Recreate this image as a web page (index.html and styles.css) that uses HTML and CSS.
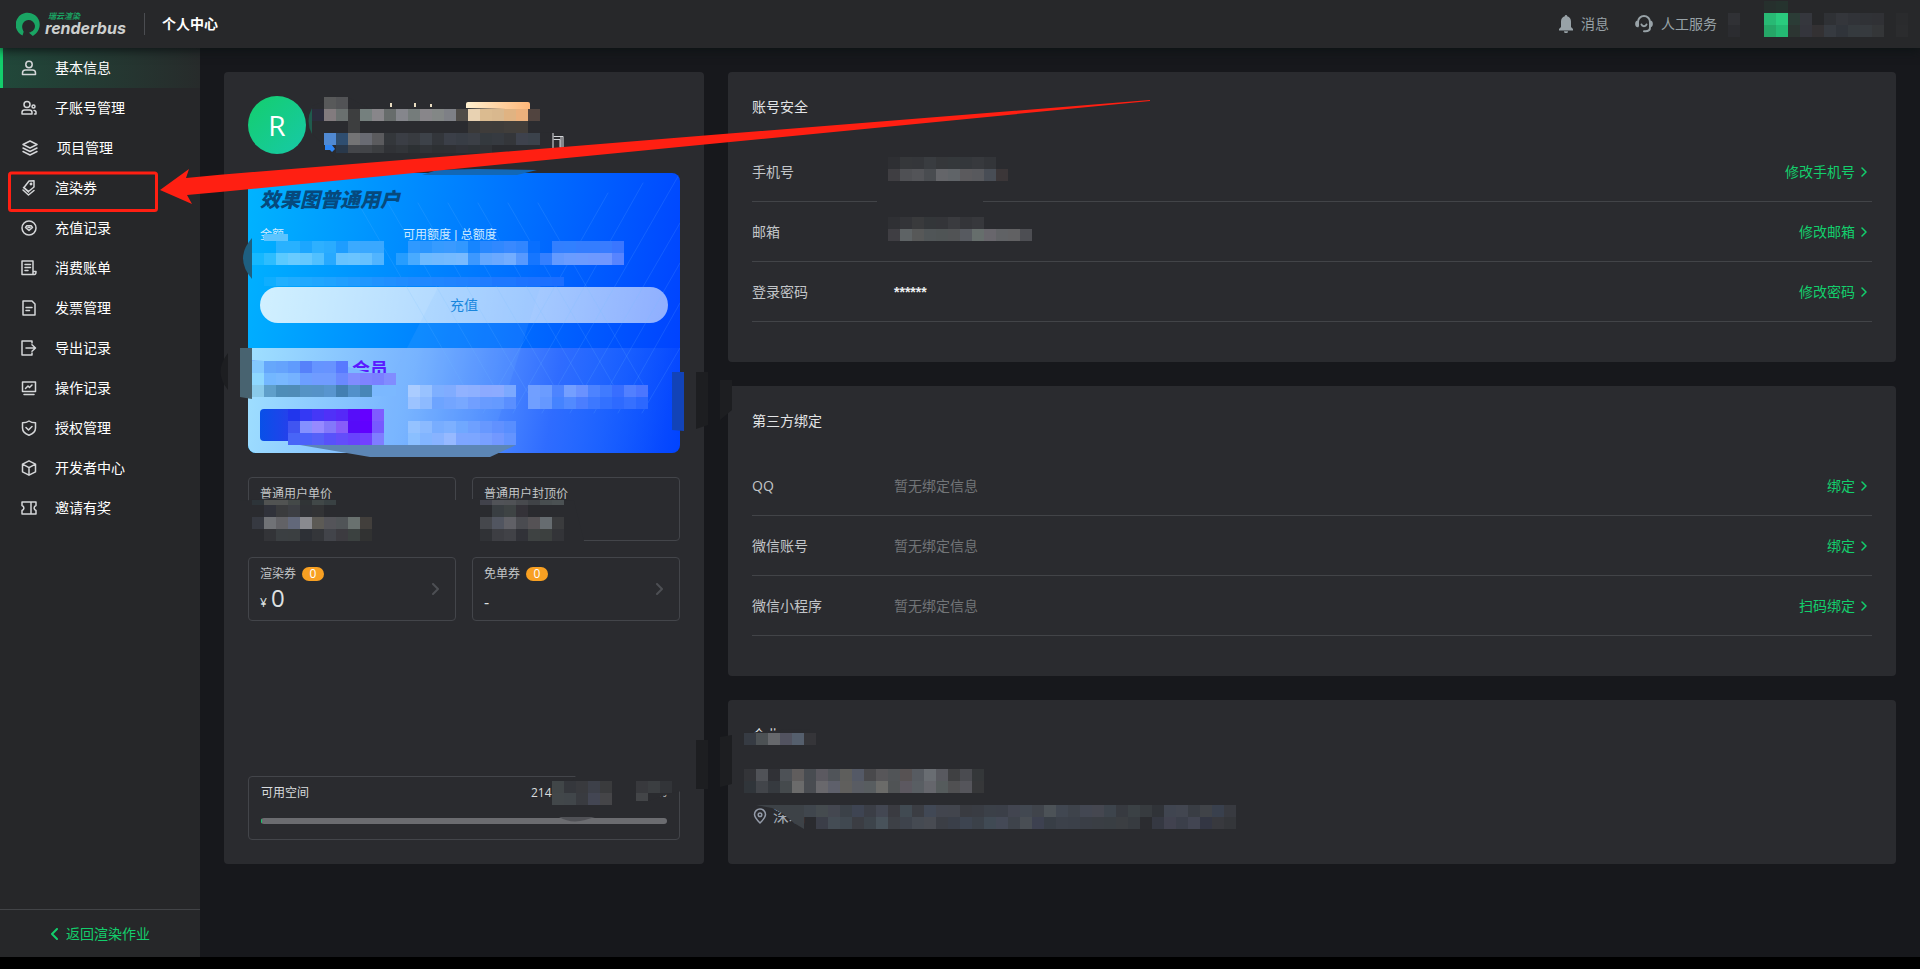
FILE: index.html
```html
<!DOCTYPE html>
<html lang="zh-CN">
<head>
<meta charset="utf-8">
<title>个人中心</title>
<link rel="stylesheet" href="styles.css">
</head>
<body>
<header class="topbar">
  <a class="logo" href="#">
    <svg class="logo-mark" viewBox="0 0 26 26" aria-hidden="true"><path d="M6.800 24.500A12.500 12.500 0 1 1 20.500 22.500L17.500 25L13.500 21.500C18 20.500 20 17.500 19.700 14A6.700 6.700 0 0 0 6.400 14.500C6.400 17 7 18.500 8 20.500Z"/></svg>
    <span class="logo-text"><span class="logo-cn">瑞云渲染</span><span class="logo-en">renderbus</span></span>
  </a>
  <h1 class="topbar-title">个人中心</h1>
  <nav class="topbar-links">
    <a class="topbar-link" href="#"><svg class="icon-bell" viewBox="0 0 14 18" aria-hidden="true"><path d="M7 0a1.200 1.200 0 0 1 1.200 1.300C10.800 1.900 12 4 12 6.500V12l2 2v1.400H0V14l2-2V6.500C2 4 3.200 1.900 5.800 1.300A1.200 1.200 0 0 1 7 0ZM5 16.300h4A2 2 0 0 1 5 16.300Z"/></svg>消息</a>
    <a class="topbar-link" href="#"><svg class="icon-head" viewBox="0 0 18 18" aria-hidden="true"><path d="M3 11V7a6 6 0 0 1 12 0v5.500c0 2.300-1.500 3.700-4.500 3.700H9M2.800 6.500c-2.200.3-2.200 4.500 0 4.800M15.200 6.500c2.200.3 2.200 4.500 0 4.800M6.500 9.500c.8 2.200 4.200 2.200 5 0"/></svg>人工服务</a>
  </nav>
</header>
<div class="shell">
  <aside class="sidebar">
    <nav class="menu">
      <a class="menu-item active" href="#"><svg class="icon" viewBox="0 0 16 16" aria-hidden="true"><circle cx="8" cy="4.500" r="3.200"/><path d="M1.500 14.500V13c0-2 1.300-3 3-3h7c1.700 0 3 1 3 3v1.500Z"/></svg>基本信息</a>
      <a class="menu-item" href="#"><svg class="icon" viewBox="0 0 16 16" aria-hidden="true"><circle cx="6" cy="4.500" r="3"/><path d="M1 14v-1.500C1 10.800 2 10 3.500 10h5c1.500 0 2.500.8 2.500 2.500V14ZM13 10.500c1.500 0 2 .8 2 1.800V14h-1.500"/><circle cx="12.500" cy="6.500" r="1.500"/></svg>子账号管理</a>
      <a class="menu-item project" href="#"><svg class="icon" viewBox="0 0 16 16" aria-hidden="true"><path d="M8 1l7 3.500L8 8 1 4.500ZM1 8l7 3.500L15 8M1 11.500L8 15l7-3.500"/></svg>项目管理</a>
      <a class="menu-item" href="#"><svg class="icon" viewBox="0 0 16 16" aria-hidden="true"><path d="M8 1l5-.2V7L7.500 11.500 3 7.500ZM2 10l5.500 5L13 10.500"/><circle cx="10" cy="4" r=".7"/><path d="M2.500 7.500L7.500 12"/></svg>渲染券</a>
      <a class="menu-item" href="#"><svg class="icon" viewBox="0 0 16 16" aria-hidden="true"><circle cx="8" cy="8" r="7"/><path d="M5.800 5.800h4.400L11.500 7.500 8 10.500 4.500 7.500ZM7 7.600h2"/></svg>充值记录</a>
      <a class="menu-item" href="#"><svg class="icon" viewBox="0 0 16 16" aria-hidden="true"><path d="M12 11.500V1H1v13.500h12.500c1 0 1.500-.8 1.500-3h-3v3M4 4.500h5.500M4 7.500h5.500M4 10.500h3"/></svg>消费账单</a>
      <a class="menu-item" href="#"><svg class="icon" viewBox="0 0 16 16" aria-hidden="true"><path d="M2 1h9l3 3v11H2ZM5 7.500h6M5 10.500h3.500"/></svg>发票管理</a>
      <a class="menu-item" href="#"><svg class="icon" viewBox="0 0 16 16" aria-hidden="true"><path d="M11 3V1H1v14h10v-2M5 8h9M11 4.800L14.500 8 11 11.200"/></svg>导出记录</a>
      <a class="menu-item" href="#"><svg class="icon" viewBox="0 0 16 16" aria-hidden="true"><path d="M1.500 2h13v9.500h-13ZM3 14.500h10M4.500 8.500L7 6l1.500 1.500L11 5"/></svg>操作记录</a>
      <a class="menu-item" href="#"><svg class="icon" viewBox="0 0 16 16" aria-hidden="true"><path d="M8 1c2 1.500 4 1.800 6.500 1.800V8c0 3.800-3 6-6.500 7.300C4.500 14 1.500 11.800 1.500 8V2.800C4 2.800 6 2.500 8 1ZM5 7.500L7.500 10 11 6.500"/></svg>授权管理</a>
      <a class="menu-item" href="#"><svg class="icon" viewBox="0 0 16 16" aria-hidden="true"><path d="M8 .800L14.500 4.200v7.600L8 15.200 1.500 11.800V4.200ZM1.500 4.200L8 7.700l6.500-3.500M8 7.700v7.500"/></svg>开发者中心</a>
      <a class="menu-item" href="#"><svg class="icon" viewBox="0 0 16 16" aria-hidden="true"><path d="M1 2h14v3.500c-2.500 1-2.500 4 0 5V14H1v-3.500c2.500-1 2.500-4 0-5ZM10 2v12"/></svg>邀请有奖</a>
    </nav>
    <a class="back" href="#"><svg class="icon-back" viewBox="0 0 8 12" aria-hidden="true"><path d="M7 1L2 6l5 5"/></svg>返回渲染作业</a>
  </aside>
  <main class="content">
    <section class="card profile">
      <div class="user">
        <span class="avatar">R</span>
        <span class="user-tag"></span>
      </div>
      <div class="wallet">
        <svg class="wallet-lines" viewBox="0 0 432 280" preserveAspectRatio="none" aria-hidden="true"><path class="beam" d="M195 105h100L240 280H105Z"/><path d="M110 30l110 190M140 30l110 190M170 30l110 190M200 30l110 190M230 30l110 190M260 30l110 190M290 30l110 190M432 50L322 240M432 90L346 240M432 0L294 240M395 10L265 240M432 130L370 240M360 20L235 240M432 175L394 240"/></svg>
        <h2 class="wallet-title">效果图普通用户</h2>
        <div class="wallet-labels"><span>金额</span><span>可用额度 | 总额度</span></div>
        <button class="recharge" type="button">充值</button>
        <div class="member">
          <h3 class="member-title">会员</h3>
          <button class="member-button" type="button" aria-label="会员"></button>
        </div>
      </div>
      <div class="stats">
        <div class="stat"><span class="stat-label">普通用户单价</span></div>
        <div class="stat"><span class="stat-label">普通用户封顶价</span></div>
        <a class="stat" href="#"><span class="stat-label">渲染券<b class="badge">0</b></span><span class="stat-value"><small>¥</small>0</span><svg class="stat-arrow" viewBox="0 0 8 12" aria-hidden="true"><path d="M1 1l5 5-5 5"/></svg></a>
        <a class="stat" href="#"><span class="stat-label">免单券<b class="badge">0</b></span><span class="stat-value dash">-</span><svg class="stat-arrow" viewBox="0 0 8 12" aria-hidden="true"><path d="M1 1l5 5-5 5"/></svg></a>
      </div>
      <div class="storage">
        <div class="storage-head"><span>可用空间</span><span class="storage-value"><span>214</span><span>%</span></span></div>
        <div class="track"><div class="fill"></div></div>
      </div>
    </section>
    <div class="column">
      <section class="card details">
        <h2 class="card-title">账号安全</h2>
        <div class="row"><span class="row-label">手机号</span><span class="row-value"></span><a class="row-link" href="#">修改手机号<svg viewBox="0 0 6 10" aria-hidden="true"><path d="M1 1l4 4-4 4"/></svg></a></div>
        <div class="row"><span class="row-label">邮箱</span><span class="row-value"></span><a class="row-link" href="#">修改邮箱<svg viewBox="0 0 6 10" aria-hidden="true"><path d="M1 1l4 4-4 4"/></svg></a></div>
        <div class="row"><span class="row-label">登录密码</span><span class="row-value set">******</span><a class="row-link" href="#">修改密码<svg viewBox="0 0 6 10" aria-hidden="true"><path d="M1 1l4 4-4 4"/></svg></a></div>
      </section>
      <section class="card details">
        <h2 class="card-title">第三方绑定</h2>
        <div class="row"><span class="row-label">QQ</span><span class="row-value">暂无绑定信息</span><a class="row-link" href="#">绑定<svg viewBox="0 0 6 10" aria-hidden="true"><path d="M1 1l4 4-4 4"/></svg></a></div>
        <div class="row"><span class="row-label">微信账号</span><span class="row-value">暂无绑定信息</span><a class="row-link" href="#">绑定<svg viewBox="0 0 6 10" aria-hidden="true"><path d="M1 1l4 4-4 4"/></svg></a></div>
        <div class="row"><span class="row-label">微信小程序</span><span class="row-value">暂无绑定信息</span><a class="row-link" href="#">扫码绑定<svg viewBox="0 0 6 10" aria-hidden="true"><path d="M1 1l4 4-4 4"/></svg></a></div>
      </section>
      <section class="card company">
        <h2 class="card-title">企业</h2>
        <p class="address"><svg viewBox="0 0 14 16" aria-hidden="true"><path d="M7 15C3.500 11.500 1.500 9 1.500 6.500a5.500 5.500 0 0 1 11 0C12.500 9 10.500 11.500 7 15Z"/><circle cx="7" cy="6.800" r="1.800"/></svg>深圳</p>
      </section>
    </div>
  </main>
</div>
<svg class="markup" width="1920" height="969" viewBox="0 0 1920 969" aria-hidden="true">
  <g>
    <path fill="#2a2b2f" d="M312 106l24-9h12l20 11 98 0 40 1 34 8v15l12 1v30H340l-28-30Z"/>
    <path fill="#1f5b4d" d="M312 108q-7 13 0 26Z"/>
    <path fill="#2b2c3c" d="M312 109h12v12h-12Z"/>
    <path fill="#2e86f5" d="M325 145h7l3 4-3 3-2-2h-5Z"/>
    <path fill="#e8dcc0" d="M390 103h2v4h-2ZM414 103h2v4h-2ZM430 104h2v3h-2Z"/>
    <path fill="#85868a" d="M560 137h4v11h-4ZM552 133h2v15h-2Z"/>
    <path fill="none" stroke="#d4d6da" d="M554 136.500h9M554 139.500h6V147"/>
    <path fill="#1268b6" d="M422 175h95l20-5-60-1-40 1Z"/>
    <path fill="#1e5f80" d="M252 238q-18 20 0 41Z"/>
    <path fill="#486370" d="M240 348h12v51l-12-2Z"/>
    <path fill="#1d1e21" d="M228 353q-15 19 0 37ZM696 372h12v53l-12 4ZM720 380h12v30l-12 10ZM696 740h12v49h-12ZM720 737l12-2v49l-12 3Z"/>
    <path fill="#1243b8" d="M672 372h12v59l-12-1Z"/>
    <path fill="#7bb8ff" d="M264 361h64l45 13h23v22H252v-36Z"/>
    <path fill="#5c86b5" d="M300 445l70 12h120l26-12Z"/>
    <path fill="#2a2b2f" d="M240 501l30-3 60 2h126v41H240ZM472 499l60-1 42 3 10 40H472ZM576 776h106v15l-10 2-24 8h-78V790q0-10 6-14ZM744 733l50-4 16 1v15h-66ZM877 200h106v4H877Z"/>
    <path fill="#3d4247" d="M756 805h48v24l-10-6-12-10-10-5Z"/>
    <path fill="#505156" d="M559 817h36l-10 3q-14 4-26-3Z"/>
  </g>
  <g id="mosaic"></g>
  <rect class="frame" x="9.500" y="173" width="147" height="37.500" rx="2"/>
  <path class="arrow" d="M160 190L189 169 186 178 220 174.700 720 134.300 1150 100V101L720 143 220 192 187 195 192 204Z"/>
</svg>
<script src="mosaic.js"></script>
</body>
</html>
```

FILE: styles.css
```css
* { box-sizing: border-box; }

body {
  margin: 0;
  min-height: 100vh;
  padding-bottom: 12px;
  display: flex;
  flex-direction: column;
  position: relative;
  overflow-x: hidden;
  background: #000;
  color: #d9dcde;
  font: 14px/22px "Open Sans", "Noto Sans CJK SC", sans-serif;
}

h1, h2, h3, p { margin: 0; font-size: 14px; font-weight: 400; }
a { color: inherit; text-decoration: none; }
button { border: 0; padding: 0; font: inherit; cursor: pointer; }
svg { flex: none; fill: none; stroke-linecap: round; stroke-linejoin: round; }

.topbar {
  height: 48px;
  flex: none;
  display: flex;
  align-items: center;
  padding: 0 203px 0 16px;
  position: relative;
  z-index: 1;
  background: #27282a;
  box-shadow: 0 2px 10px #0c1314;
}
.logo { display: flex; gap: 4px; align-items: center; width: 129px; height: 22px; border-right: 1px solid #4b4d51; }
.logo-mark { width: 25px; height: 25px; fill: #1aa564; }
.logo-text { display: flex; flex-direction: column; font-style: italic; white-space: nowrap; }
.logo-cn { color: #1aa564; font-size: 8px; line-height: 8px; font-weight: 700; padding-left: 3px; }
.logo-en { color: #cdcfce; font-family: "Inter", sans-serif; font-size: 16px; line-height: 16px; font-weight: 700; }
.topbar-title { margin-left: 17px; color: #fff; font-weight: 700; }
.topbar-links { margin-left: auto; display: flex; gap: 26px; }
.topbar-link { display: flex; align-items: center; gap: 8px; color: #98a2a7; }
.icon-bell { width: 14px; height: 18px; fill: #98a2a7; }
.icon-head { width: 18px; height: 18px; stroke: #98a2a7; stroke-width: 2; }

.shell { flex: 1; display: flex; background: #17181c; }
.sidebar { width: 200px; flex: none; display: flex; flex-direction: column; background: #262729; color: #fff; }
.menu-item { display: flex; align-items: center; gap: 18px; height: 40px; padding-left: 21px; }
.menu-item.project { gap: 19px; padding-left: 22px; }
.menu-item.active { padding-left: 18px; border-left: 3px solid #13ce6c; background: linear-gradient(90deg, #21483a, #272b2b); }
.icon { width: 16px; height: 16px; stroke: #d4d6d8; stroke-width: 1.5; }
.back {
  margin-top: auto;
  height: 48px;
  display: flex;
  align-items: center;
  justify-content: center;
  gap: 8px;
  border-top: 1px solid #424447;
  color: #13ce6c;
}
.icon-back { width: 8px; height: 12px; stroke: #13ce6c; stroke-width: 2; }

.content { flex: 1; display: flex; align-items: flex-start; gap: 24px; padding: 24px; }
.card { padding: 24px; border-radius: 4px; background: #2a2b2f; }
.column { flex: 1; display: flex; flex-direction: column; gap: 24px; }

.profile { width: 480px; min-height: 792px; display: flex; flex-direction: column; }
.user { display: flex; margin-bottom: 19px; }
.avatar {
  width: 58px;
  height: 58px;
  border-radius: 50%;
  background: linear-gradient(135deg, #14ce6c, #17c9a8);
  color: #fff;
  font-size: 28px;
  line-height: 58px;
  text-align: center;
}
.user-tag { width: 64px; height: 20px; margin: 6px 0 0 160px; border-radius: 2px; background: linear-gradient(90deg, #fff0d0, #ffb779); }

.wallet {
  position: relative;
  height: 280px;
  display: flex;
  flex-direction: column;
  border-radius: 8px;
  overflow: hidden;
  background: linear-gradient(100deg, #00b4ff, #0080ff 45%, #0043ff 96%);
}
.wallet-lines { position: absolute; width: 100%; height: 100%; stroke: rgba(120, 190, 255, 0.16); stroke-width: 1; }
.beam { fill: rgba(120, 190, 255, 0.12); stroke: none; }
.wallet-title { margin: 12px 12px 0; color: #06497d; font-size: 20px; line-height: 30px; font-weight: 900; font-style: italic; }
.wallet-labels {
  display: grid;
  grid-template-columns: 143px 1fr;
  margin: 10px 12px 0;
  color: #cfeaff;
  font-family: "Liberation Sans", "Noto Sans CJK SC", sans-serif;
  font-size: 12px;
  line-height: 20px;
}
.recharge {
  height: 36px;
  margin: 42px 12px 25px;
  border-radius: 18px;
  background: linear-gradient(100deg, rgba(255, 255, 255, 0.82), rgba(255, 255, 255, 0.56));
  color: #0b7fd9;
}
.member { flex: 1; padding: 12px; background: linear-gradient(100deg, #a0e0ff, #77b2ff 38%, #2f6cff 70%, rgba(0, 67, 255, 0.1)); }
.member-title { padding-left: 92px; font-size: 18px; line-height: 18px; font-weight: 700; color: #5a1aff; }
.member-button { display: block; width: 124px; height: 32px; margin-top: 31px; border-radius: 4px; background: linear-gradient(90deg, #0850e8, #4a2cf0 55%, #6500ff); }

.stats { display: grid; grid-template-columns: 1fr 1fr; gap: 16px; margin-top: 24px; }
.stat { position: relative; height: 64px; display: flex; flex-direction: column; padding: 6px 11px; border: 1px solid #43454a; border-radius: 4px; }
.stat-label { display: flex; align-items: center; gap: 6px; font-size: 12px; line-height: 20px; color: #c4c7c9; }
.badge { width: 22px; height: 14px; border-radius: 7px; background: #f8a022; color: #fff; line-height: 14px; font-weight: 400; text-align: center; }
.stat-value { display: flex; align-items: baseline; gap: 4px; color: #dee1e2; font-size: 24px; line-height: 28px; }
.stat-value small { font-size: 12px; }
.stat-value.dash { font-size: 16px; line-height: 36px; }
.stat-arrow { position: absolute; right: 15px; top: 25px; width: 8px; height: 12px; stroke: #4d4f54; stroke-width: 2; }

.storage { height: 64px; margin-top: auto; padding: 6px 12px; border: 1px solid #43454a; border-radius: 4px; font-size: 12px; line-height: 20px; }
.storage-head { display: flex; justify-content: space-between; }
.storage-value { display: flex; justify-content: space-between; width: 136px; }
.track { height: 6px; margin-top: 15px; border-radius: 3px; background: #6b6c70; overflow: hidden; }
.fill { width: 1px; height: 6px; background: #13ce6c; }

.card-title { color: #e2e4e6; margin-bottom: 24px; }
.details { min-height: 290px; }
.row { height: 60px; display: flex; align-items: center; border-bottom: 1px solid #424448; }
.row-label { width: 142px; color: #c2c5c8; }
.row-value { flex: 1; color: #727578; }
.row-value.set { color: #eceef0; font-family: "Liberation Sans", sans-serif; font-weight: 700; }
.row-link { display: flex; align-items: center; gap: 6px; padding-right: 5px; color: #13ce6c; }
.row-link svg { width: 6px; height: 10px; stroke: #13ce6c; stroke-width: 1.5; }
.company { min-height: 164px; }
.company .card-title { margin-bottom: 58px; }
.address { display: flex; align-items: center; gap: 6px; padding-left: 1px; color: #a4abb5; font-size: 16px; line-height: 24px; }
.address svg { width: 14px; height: 16px; stroke: #949ba9; stroke-width: 1.5; }

.markup { position: absolute; left: 0; top: 0; z-index: 2; pointer-events: none; }
.frame { stroke: #ff1f12; stroke-width: 3; }
.arrow { fill: #ff1f12; }
```

FILE: mosaic.js
```js
// Redaction blocks: [x, y, colours of consecutive 12px cells, cell height]; "-" leaves a cell empty.
const rows = [
  [324, 97, "#58595a #525356"],
  [324, 109, "#827b7e #6a706f #3d3e3f #75807e #88868a #676c6b #85868c #757c7b #88868a #838786 #7e8086 #4f4c48 #e8d2b2 #dbbb90 #d9b88e #e0b382 #ebb07c #51443f"],
  [348, 121, "#3d3e3f - - - - - - - - - #3a3938 #3f3c3a #3e3c3a #413e3b #423e3a"],
  [324, 133, "#5089d2 #2f4e70 #747475 #696b73 #5b5b5e #34373b #3b3e45 #383b40 #3d4249 #33363b #3b3f48 #383d45 #3b3f46 #34393e #363a40 #34363a #3e424d #3b424b"],
  [336, 145, "#29384a #44464a #424448 #3c3e41 #303236 #323539 #2c3033 #303337 #2d3033 #2e3034 #303238 #2e3236 #303236", 8],
  [1728, 13, "#303135 - - #28b974 #2acb7e #2b3c36 #35373d - #2f3135 #34363b #313338 #303236 #303135 - #2a2b2d"],
  [1728, 25, "#2b2c30 - - #25a667 #24b973 #2c3532 #34353c #333133 #363a40 #30343a #353a3e #363a3e #343638 - #2b2c2e"],
  [1764, 1, "#26302d #25332e"],
  [888, 157, "#2e2f33 #35373a #34363a #393c40 #35373a #34383b #34373b #37393d #333539"],
  [888, 169, "#3f3e42 #4f5054 #535458 #494c50 #646569 #606468 #5b5a5d #58595d #484d55 #3b3638"],
  [888, 217, "#2f3034 #333438 #393a3c #333639 #343539 #3a3b3f #343539 #37383c"],
  [888, 229, "#3f3e43 #5e6365 #575858 #505557 #4f5455 #515355 #575a60 #666e6c #68666c #606265 #616163 #4d4e53"],
  [264, 234, "#5bc4ff #5bc4ff", 7],
  [276, 241, "#28b1ff #28b1ff #1ca6ff #2eb0ff #2aacff #1e9dff #3baaff #3aa8ff #3aa8ff - - #2f99ff #2b96ff #369bff #3a9aff #3298ff #1685ff #2988ff #3088ff #3989ff #3186ff #086fff - #327fff #3180ff #347dff #347dff #397cff #3a76ff"],
  [252, 253, "#16b8ff #2dbdff #5bcaff #68cbff #64c8ff #51c0ff #27a9ff #67c3ff #6ac4ff #66c1ff #51b4ff - #269dff #49abff #6dbaff #71b9ff #74baff #78baff #3c98ff #64a8ff #6ba9ff #73adff #5799ff #1676ff #3580ff #639aff #6a9cff #6c9bff #6d99ff #7097ff #5784ff"],
  [264, 277, "#0faeff #21b0ff #20acff #20a9ff #20a6ff #20a3ff #209fff #209bff #2097ff #2093ff #2090ff #208dff #208aff #2088ff #2086ff #2084ff #2082ff #2080ff #207cff #1e78ff #1e78ff #1d74ff #1d72ff #1c70ff #1c6eff", 9],
  [252, 361, "#84c9ff #66a7fb #65a3fc #609bfd #5681fa #6594ff #6793ff #587aff"],
  [252, 373, "#8fd8ff #73b7ff #78b8ff #75b2ff #6c9fff #709cff #709cff #6a89ff #808cff #7e83ff #7a80ff #818cff"],
  [252, 385, "#8acaea #5f9fca #4e8db8 #4f8cb7 #5593c5 #5592c7 #5895cf #437fb2 #5290ca #4786b7"],
  [288, 409, "#2136ed #3439f4 #4537f7 #5031f8 #5529f8 #560ef9 #6500ff #7f5cff"],
  [288, 421, "#4055f1 #8490ff #968aff #8378fa #875df9 #560cf8 #6100ff #7759ff"],
  [288, 433, "#4865f7 #4b61fa #5560f8 #5852fa #634dfa #6843fd #7241ff #7f7dff"],
  [408, 385, "#aaccff #98c2ff #7eafff #80acff #91b2ff #8eb0ff #8caaff #8cabff #7ca9ff - #719fff #6b9cff #4d84ff #749fff #6a92ff #4d83ff #407bff #386eff #5280ff #4b76ff"],
  [408, 397, "#9cc3ff #8dbaff #6da4ff #73a5ff #78a8ff #719fff #689bff #659aff #5a8fff - #709fff #6598ff #4583ff #528aff #4b7eff #3d78ff #3371ff #2e6aff #3670ff #2c68ff"],
  [408, 421, "#94c2ff #8bbaff #78adff #7db0ff #70a8ff #6ea0ff #6798ff #6191ff #588eff"],
  [408, 433, "#8abfff #82b5ff #88b3ff #96b9ff #7da6ff #7ca6ff #78a0ff #7298ff #6494ff"],
  [252, 500, "#2d3439 #515352 #515352 #444948 #303436 #414848 #394143", 5],
  [264, 505, "#30323a #3a3b3d #3d3f44 #303236 #323335"],
  [252, 517, "#363941 #707276 #626266 #62687a #898a8f #5c5a55 #545459 #505457 #69716f #423f3c"],
  [264, 529, "#333438 #3b3f42 #3b3f41 #2d3036 #34363a #42444a #3c3b40 #3b4140 #313232"],
  [480, 500, "#41424b #515358 #505256 #484a4e #404347 #484e50 #4b5153", 5],
  [492, 505, "#393e42 #3e4344 #343238"],
  [480, 517, "#45474c #515560 #606066 #4a4b50 #555255 #666c70 #3a3b3d"],
  [480, 529, "#303236 #3d3e43 #414247 #313238 #3e4242 #3c403f #333438"],
  [552, 781, "#414648 #35373c #393a3e #3d4049 #3a3b3d - - #38393d #3b3e41 #323438"],
  [552, 793, "#42474a #41464a #393b40 #434653 #454548"],
  [636, 793, "#434548", 8],
  [744, 733, "#363b43 #4c5154 #66686c #525360 #555f6d #353539"],
  [744, 769, "#333438 #505257 #303136 #4d5156 #605d5d #484c51 #5b5960 #505459 #5e5e5c #545966 #49494c #575659 #515457 #575253 #575b61 #696d72 #58595f #3f4042 #4a4b50 #343739"],
  [744, 781, "#30353a #42454a #363a3f #454a4d #6b6b6b #494c51 #69686c #5e606b #605f5d #595c63 #585d60 #6b6b69 #505355 #5c5860 #595e63 #65666c #555b5c #505052 #55555b #363739"],
  [804, 805, "#40464d #454b4f #444750 #3b4148 #3e4452 #3b3e46 #434752 #3a3b41 #414a52 #3b3d43 #414855 #42454e #42454d #393b41 #393c43 #3b4048 #3b3f48 #424550 #424851 #40444b #4c5257 #414751 #3e434b #434752 #454750 #3d444c #373a40 #3b4145 #373b3f #303338 #404550 #424650 #393d44 #404348 #39404d #383a40"],
  [816, 817, "#3b3e48 #444c54 #404850 #3b3d43 #3d444b #48525a #3d4046 #3e434c #454a52 #484b52 #3b3e45 #3a3f49 #3d4450 #3b4149 #404a54 #444956 #3e434b #494e54 #3d4150 #383e46 #3c414a #3b4049 #3a3e46 #3a3e44 #393e43 #3b3e42 #373b40 #2b2c30 #353842 #41424f #3b3f4a #424552 #333643 #38393e #34363a"]
];
const ns = "http://www.w3.org/2000/svg";
const layer = document.getElementById("mosaic");
for (const [x, y, colours, height = 12] of rows) {
  colours.split(" ").forEach((colour, i) => {
    if (colour === "-") return;
    const cell = document.createElementNS(ns, "rect");
    cell.setAttribute("x", x + i * 12);
    cell.setAttribute("y", y);
    cell.setAttribute("width", 12);
    cell.setAttribute("height", height);
    cell.setAttribute("fill", colour);
    layer.appendChild(cell);
  });
}
```
